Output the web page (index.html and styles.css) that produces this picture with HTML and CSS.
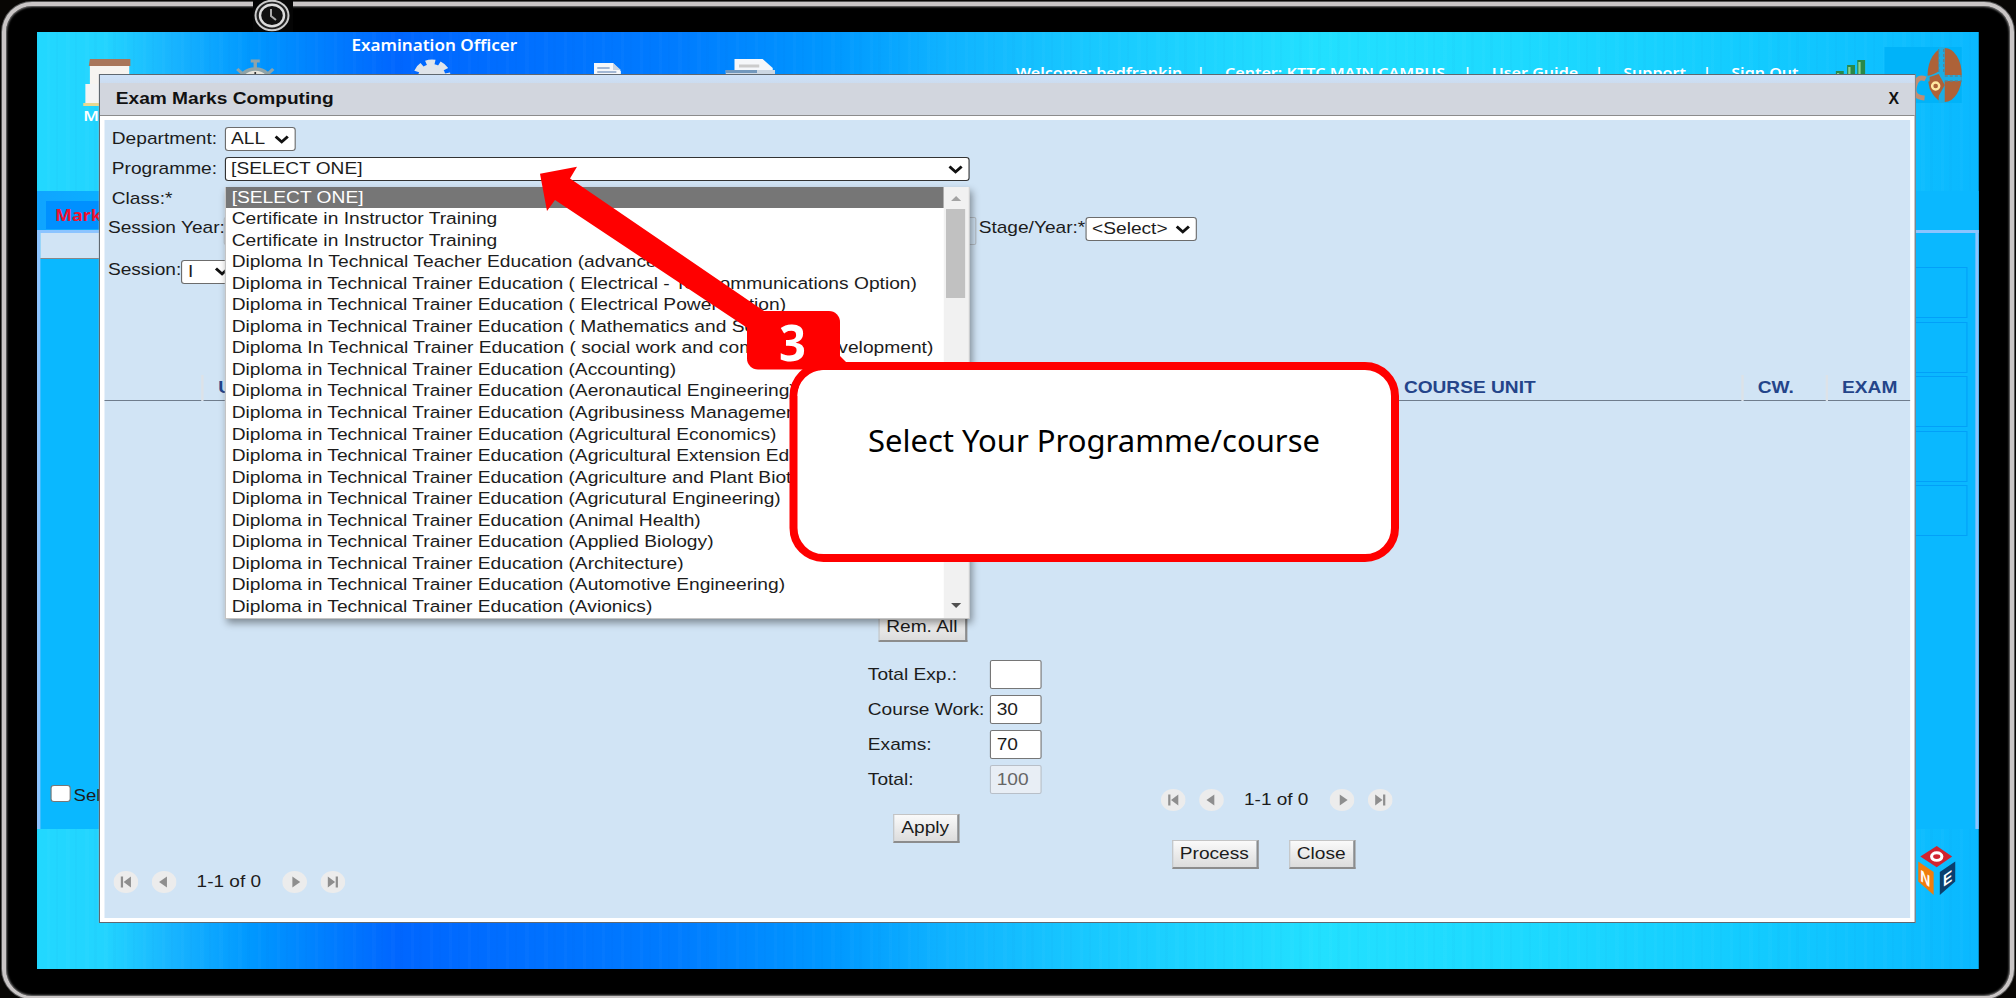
FILE: index.html
```html
<!DOCTYPE html>
<html lang="en">
<head>
<meta charset="utf-8">
<title>Exam Marks Computing</title>
<link rel="stylesheet" href="styles.css">
</head>
<body>
<div class="monitor">
  <div class="bezel"></div>
  <svg class="camera" viewBox="0 0 40 34" width="40" height="34">
    <rect width="40" height="34" fill="#050505"/>
    <ellipse cx="19" cy="15.5" rx="16.5" ry="14.8" fill="#222" stroke="#ccc" stroke-width="2"/>
    <ellipse cx="19" cy="15.5" rx="12" ry="10.8" fill="#111" stroke="#ddd" stroke-width="2.4"/>
    <path d="M18 9v7l5 4" fill="none" stroke="#aaa" stroke-width="2"/>
  </svg>

  <div class="screen">
    <header class="topbar">
      <div class="role">Examination Officer</div>
      <div class="launcher">
        <svg class="ic-board" width="46" height="47" viewBox="0 0 46 47"><path d="M6 7h35v40H6z" fill="#f7f4f0"/><path d="M6 0h36v7H5z" fill="#a9765a"/><path d="M2 25h18v20H2z" fill="#f4f4f4"/><path d="M0 44h30v3H0z" fill="#e8d890"/></svg>
        <svg class="ic-watch" width="38" height="30" viewBox="0 0 38 30"><circle cx="19" cy="25" r="15" fill="#e6e4dc" stroke="#8fa3a8" stroke-width="3.5"/><path d="M19 1v9M15 2h8M3 10l5 5M35 10l-5 5" stroke="#8fa3a8" stroke-width="3"/><path d="M19 13v4M11 17l2 3M27 17l-2 3" stroke="#333" stroke-width="1.5"/></svg>
        <svg class="ic-gear" width="40" height="30" viewBox="0 0 40 30"><circle cx="19" cy="17" r="12" fill="#dfe4ea"/><circle cx="19" cy="17" r="13" fill="none" stroke="#dfe4ea" stroke-width="7" stroke-dasharray="7.5 3.7"/></svg>
        <svg class="ic-doc" width="24" height="26" viewBox="0 0 24 26"><path d="M0 0h17l7 8v18H0z" fill="#f5f7fa"/><path d="M3 5h11M3 9h17" stroke="#86a3c8" stroke-width="1.500"/><path d="M17 0v7h7" fill="#c8d4e2"/></svg>
        <svg class="ic-print" width="44" height="30" viewBox="0 0 44 30"><path d="M8 0h25l9 9v12H8z" fill="#f5f7fa"/><path d="M12 7h18" stroke="#ccc" stroke-width="3"/><path d="M0 11h44v14H0z" fill="#ccd7e3"/><path d="M0 11h28v3H0z" fill="#7298bd"/></svg>
        <div class="links"><span class="l1">Welcome: bedfrankin</span><i>|</i><span class="l2">Center: KTTC MAIN CAMPUS</span><i>|</i><span class="l3">User Guide</span><i>|</i><span class="l4">Support</span><i>|</i><span class="l5">Sign Out</span></div>
        <svg class="ic-bars" width="28" height="30" viewBox="0 0 28 30"><path d="M1 12h7v18H1zM11 6h7v24h-7zM20 1h7v29h-7z" fill="#29894a"/><path d="M2 14h2v16H2zM12 8h2v22h-2zM21 3h2v27h-2z" fill="#8cd18f"/></svg>
        <svg class="ic-logo" width="69" height="56" viewBox="0 0 77 56" preserveAspectRatio="none"><path d="M0 0h77v56H0z" fill="#00b3f9"/><ellipse cx="60" cy="28" rx="17" ry="27" fill="#ad6238"/><path d="M57 0v30M53 31h24M57 30v26M42 32q11-2 15-7" fill="none" stroke="#19aee5" stroke-width="6"/><path d="M54 2v24M59 2v24M60 29h17M60 34h17" stroke="#5b8290" stroke-width="1.3" stroke-dasharray="3 2"/><path d="M45 30l9-3 6 11-7 13-8-9z" fill="#ad6238"/><circle cx="51" cy="39" r="3.5" fill="none" stroke="#ffe9a0" stroke-width="2.4"/><path d="M41 32q-8-4-11 7t10 12" fill="none" stroke="#c08d72" stroke-width="5"/></svg>
      </div>
      <div class="menu-word">M</div>
    </header>
    <div class="tabs"><div class="tab">Mark</div></div>
    <main class="page">
      <div class="subbar"></div>
      <div class="boxes"><div></div><div></div><div></div><div></div><div></div></div>
      <label class="selectall"><span class="check"></span>Sel</label>
    </main>
    <footer class="foot">
      <svg width="42" height="50" viewBox="0 0 46 52" preserveAspectRatio="none">
        <path d="M6 24l-6 10h6z" fill="#c93a5c"/>
        <path d="M27 0l15 11-15 11-16-11z" fill="#d1232f"/>
        <ellipse cx="27" cy="11" rx="5" ry="4" fill="none" stroke="#fff" stroke-width="3"/>
        <path d="M9 16l15 11v24L9 37z" fill="#f07d0c"/><path d="M45 16L30 27v24l15-14z" fill="#0b3f6d"/>
        <text transform="matrix(.8 .6 0 1 11 36)" font-size="17" class="cube">N</text>
        <text transform="matrix(.8 -.6 0 1 33 43)" font-size="17" class="cube">E</text>
      </svg>
    </footer>

    <section class="modal">
      <div class="modal-strip"></div>
      <div class="titlebar"><h1>Exam Marks Computing</h1><span>X</span></div>
      <div class="body">
        <div class="frow"><span class="lab">Department:</span><div class="select dept">ALL<svg class="chev" viewBox="0 0 12 8"><path d="M1 1.2l5 5 5-5"/></svg></div></div>
        <div class="frow"><span class="lab">Programme:</span><div class="select prog">[SELECT ONE]<svg class="chev" viewBox="0 0 12 8"><path d="M1 1.2l5 5 5-5"/></svg></div></div>
        <div class="frow"><span class="lab">Class:*</span></div>
        <div class="frow year"><span class="lab">Session Year:*</span><div class="blank"></div><span>Stage/Year:*</span><div class="select stage">&lt;Select&gt;<svg class="chev" viewBox="0 0 12 8"><path d="M1 1.2l5 5 5-5"/></svg></div></div>
        <div class="frow session"><span>Session:</span><div class="select sess">I<svg class="chev" viewBox="0 0 12 8"><path d="M1 1.2l5 5 5-5"/></svg></div></div>
        <div class="thead"><div></div><div>UNIT</div><div>COURSE UNIT</div><div>CW.</div><div>EXAM</div></div>
        <div class="lower">
          <div class="left"><div class="pager">
            <svg viewBox="0 0 22 22"><circle cx="11" cy="11" r="11"/><path d="M15.500 5.500v11l-6.500-5.500zM6.500 5.500h2v11h-2z"/></svg>
            <svg viewBox="0 0 22 22"><circle cx="11" cy="11" r="11"/><path d="M13.500 5.500v11l-7-5.500z"/></svg>
            <b>1-1 of 0</b>
            <svg viewBox="0 0 22 22"><circle cx="11" cy="11" r="11"/><path d="M9 5.500v11l7-5.500z"/></svg>
            <svg viewBox="0 0 22 22"><circle cx="11" cy="11" r="11"/><path d="M6.500 5.500v11l6.500-5.500zM13.500 5.500h2v11h-2z"/></svg>
          </div></div>
          <div class="mid">
            <div class="btn rem">Rem. All</div>
            <div class="field"><span>Total Exp.:</span><div class="input"></div></div>
            <div class="field"><span>Course Work:</span><div class="input">30</div></div>
            <div class="field"><span>Exams:</span><div class="input">70</div></div>
            <div class="field"><span>Total:</span><div class="input off">100</div></div>
            <div class="btn apply">Apply</div>
          </div>
          <div class="right">
            <div class="pager">
            <svg viewBox="0 0 22 22"><circle cx="11" cy="11" r="11"/><path d="M15.500 5.500v11l-6.500-5.500zM6.500 5.500h2v11h-2z"/></svg>
            <svg viewBox="0 0 22 22"><circle cx="11" cy="11" r="11"/><path d="M13.500 5.500v11l-7-5.500z"/></svg>
            <b>1-1 of 0</b>
            <svg viewBox="0 0 22 22"><circle cx="11" cy="11" r="11"/><path d="M9 5.500v11l7-5.500z"/></svg>
            <svg viewBox="0 0 22 22"><circle cx="11" cy="11" r="11"/><path d="M6.500 5.500v11l6.500-5.500zM13.500 5.500h2v11h-2z"/></svg>
            </div>
            <div class="actions"><div class="btn process">Process</div><div class="btn close">Close</div></div>
          </div>
        </div>
      </div>
    </section>

    <div class="dropdown">
      <ul>
        <li class="on">[SELECT ONE]</li>
        <li>Certificate in Instructor Training</li>
        <li>Certificate in Instructor Training</li>
        <li>Diploma In Technical Teacher Education (advanced)</li>
        <li>Diploma in Technical Trainer Education ( Electrical - Telecommunications Option)</li>
        <li>Diploma in Technical Trainer Education ( Electrical Power Option)</li>
        <li>Diploma in Technical Trainer Education ( Mathematics and Science)</li>
        <li>Diploma In Technical Trainer Education ( social work and community development)</li>
        <li>Diploma in Technical Trainer Education (Accounting)</li>
        <li>Diploma in Technical Trainer Education (Aeronautical Engineering)</li>
        <li>Diploma in Technical Trainer Education (Agribusiness Management)</li>
        <li>Diploma in Technical Trainer Education (Agricultural Economics)</li>
        <li>Diploma in Technical Trainer Education (Agricultural Extension Education)</li>
        <li>Diploma in Technical Trainer Education (Agriculture and Plant Biotechnology)</li>
        <li>Diploma in Technical Trainer Education (Agricutural Engineering)</li>
        <li>Diploma in Technical Trainer Education (Animal Health)</li>
        <li>Diploma in Technical Trainer Education (Applied Biology)</li>
        <li>Diploma in Technical Trainer Education (Architecture)</li>
        <li>Diploma in Technical Trainer Education (Automotive Engineering)</li>
        <li>Diploma in Technical Trainer Education (Avionics)</li>
      </ul>
      <div class="scroll"><svg viewBox="0 0 22 22"><path d="M6.500 14h9l-4.500-5z" fill="#a3a3a3"/></svg><div class="thumb"></div><svg viewBox="0 0 22 22"><path d="M6.500 7h9l-4.500 5z" fill="#505050"/></svg></div>
    </div>
  </div>

  <svg class="callout" width="880" height="410" viewBox="530 160 880 410">
    <path d="M540 173.700L577 166.700L570 178.500L767 313V341L555 200L547 211z" fill="#f00"/>
    <path d="M838 354l9 9h-12z" fill="#f00"/>
    <rect x="793.500" y="366" width="601.500" height="192" rx="30" fill="#fff" stroke="#f00" stroke-width="8"/>
    <rect x="747" y="311" width="93" height="58.500" rx="11" fill="#f00"/>
    <path d="M797.500 388q2-18 26-18h20l-10-6h-26z" fill="#f00"/>
    <path d="M797.500 396a30 26 0 0 1 30-26h30v20h-50z" fill="#fff"/>
    <text x="779" y="361" font-size="51" font-weight="700" fill="#fff" textLength="27" lengthAdjust="spacingAndGlyphs">3</text>
    <text x="868" y="452" font-size="31" fill="#000" textLength="452" lengthAdjust="spacingAndGlyphs">Select Your Programme/course</text>
  </svg>
</div>
</body>
</html>
```

FILE: styles.css
```css
* { box-sizing: border-box; }
body { margin: 0; background: #080604; font-family: "Liberation Sans", Arial, sans-serif; font-size: 17px; color: #1c1c1c; }
.monitor { position: relative; width: 2016px; height: 998px; overflow: hidden; }
.bezel { position: absolute; left: 2px; top: 2px; width: 2012px; height: 997px; border: 4.500px solid #c9c5c5; border-bottom-width: 3px; border-radius: 30px; background: #000; box-shadow: inset 0 0 2px 1px #777, 0 0 0 1px #555; }
.camera { position: absolute; left: 253px; top: 0; }

/* The desktop is shown 12.5% wider than its native size */
.screen {
  position: absolute; left: 37px; top: 32px; width: 1726px; height: 937px; overflow: hidden;
  transform: scaleX(1.125); transform-origin: 0 0;
  display: flex; flex-direction: column;
  background:
    repeating-linear-gradient(90deg, rgba(0,60,160,.02) 0 2px, transparent 2px 9px, rgba(255,255,255,.02) 9px 12px, transparent 12px 17px),
    linear-gradient(90deg, #22d8ff 0, #22d4ff 3.500%, #18b4ff 7%, #0098ff 11%, #0066ff 18.500%, #006cff 23%, #007cff 33%, #0098ff 41%, #10b4ff 47%, #18c8ff 54%, #22e0ff 66%, #1cd8ff 78%, #12caff 89%, #0ab8ff 100%);
}
.topbar { height: 159px; flex: none; color: #fff; font-family: "Noto Sans", sans-serif; font-weight: 600; }
.role { height: 27px; padding-left: 279.500px; line-height: 27px; font-size: 15.200px; white-space: nowrap; }
.launcher { height: 47px; display: flex; align-items: flex-start; white-space: nowrap; }
.launcher svg { flex: none; }
.ic-board { margin-left: 41px; }
.ic-watch { margin-left: 88px; }
.ic-gear { margin-left: 119px; }
.ic-doc { margin: 4px 0 0 123px; }
.ic-print { margin-left: 93px; }
.links { display: flex; margin: 2px 0 0 214px; font-size: 14.300px; line-height: 23px; }
.links i { width: 43px; text-align: center; font-style: normal; }
.l1 { width: 143px; } .l2 { width: 194px; } .l3 { width: 74px; } .l4 { width: 53px; } .l5 { width: 62px; }
.ic-bars { margin-left: 30px; }
.ic-logo { margin: -12px 0 0 16px; }
.menu-word { padding-left: 41px; font-size: 15px; line-height: 19px; }
.tabs { height: 39px; flex: none; padding: 10px 0 0 8px; background: linear-gradient(90deg, #10a4ff, #0ab0ff 60px, #0ab8ff 200px); }
.tab { width: 90px; height: 28px; padding-left: 8px; background: #0090ff; color: #f01030; font: bold 16px/28px "Noto Sans", sans-serif; }
.page { height: 599px; flex: none; position: relative; background: #0ab8ff; border: solid #8cc4ff; border-width: 3px 3px 0; }
.subbar { height: 26px; background: #d1e4f5; border-bottom: 1px solid #888; width: 1000px; }
.boxes { display: flex; flex-direction: column; gap: 3.500px; padding: 8px 7px 0 0; height: 516px; margin-left: 1000px; }
.boxes div { height: 51px; border: 1px solid #02a0f8; flex: none; }
.selectall { display: flex; gap: 3px; padding-left: 8.500px; align-items: center; height: 40px; font-size: 16.500px; }
.check { width: 18px; height: 17px; margin-top: -4px; background: #fff; border: 1px solid #777; border-radius: 3px; }
.foot { flex: 1; display: flex; justify-content: flex-end; padding: 17px 20px 0 0; }
.cube { font-weight: bold; fill: #fff; }

.modal { position: absolute; left: 55px; top: 42px; width: 1615px; height: 849px; border: 1px solid #606870; background: #fff; display: flex; flex-direction: column; }
.modal-strip { height: 8px; background: linear-gradient(#cfe2f8, #cbdcf0); }
.titlebar { height: 33px; flex: none; display: flex; justify-content: space-between; align-items: center; padding: 0 13px 1px 14px; background: #d2d6de; border-bottom: 1.500px solid #8c8c8c; color: #111; font-weight: bold; }
.titlebar h1 { margin: 0; font-size: 17px; }
.titlebar span { font-size: 16.500px; transform: scaleX(.85); }
.body { flex: 1; margin: 4px; padding-top: 4px; background: #d1e4f5; display: flex; flex-direction: column; min-height: 0; }
.frow { height: 30px; flex: none; display: flex; align-items: center; padding-left: 6.500px; white-space: nowrap; }
.lab { width: 100px; flex: none; }
.select { height: 24px; display: flex; align-items: center; justify-content: space-between; padding: 0 5px 0 5px; border: 1px solid #6c6c6c; border-radius: 3px; background: #fff; }
.chev { width: 13px; height: 9px; fill: none; stroke: #111; stroke-width: 2.400; }
.dept { width: 63px; } .prog { width: 662px; border-color: #333; } .stage { width: 99px; margin-left: 0; } .sess { width: 49px; margin-left: 0; }
.year { padding-left: 3px; height: 27px; }
.blank { width: 669px; height: 28px; margin: 6px 2.500px 0 2.500px; border: 1px solid #b4bcc4; border-radius: 2px; }
.year .stage { margin-top: 3px; }
.session { padding-left: 3px; height: 58px; }
.session .select { margin-top: 3px; }
.thead { flex: none; height: 26px; margin-top: 76px; display: grid; grid-template-columns: 86px 1053px 315.500px 75px 1fr; border-bottom: 1.500px solid #6f7c8c; color: #24448a; font-weight: bold; line-height: 25px; }
.thead div { border-left: 2px solid #dde2e8; padding-left: 13px; height: 26px; }
.thead div:first-child, .thead div:nth-child(3) { border-color: transparent; }
.thead div:nth-child(3) { padding-left: 14px; }
.lower { flex: 1; display: grid; grid-template-columns: 678.500px 260px 1fr; }
.left { display: flex; align-items: flex-end; padding: 0 0 25px 7.500px; }
.pager { display: flex; align-items: center; gap: 12.700px; height: 22px; }
.pager svg { width: 22px; height: 22px; fill: #8e8e8e; }
.pager circle { fill: #ececec; }
.pager b { font-weight: normal; width: 58px; margin: 0 5px; white-space: nowrap; font-size: 16.900px; }
.mid { padding-top: 212px; }
.btn { height: 29px; display: flex; align-items: center; justify-content: center; background: linear-gradient(#fafafa, #dcdcdc); border: solid; border-width: 1px 2px 2px 1px; border-color: #c4c4c4 #8c8c8c #8c8c8c #c4c4c4; }
.rem { width: 79px; margin: 0 0 15px 9px; }
.field { display: flex; align-items: center; height: 35px; }
.field span { width: 108.500px; white-space: nowrap; }
.input { width: 46px; height: 29px; padding-left: 5px; line-height: 27px; background: #fff; border: 1.500px solid #767676; border-radius: 2px; }
.off { background: #e8eef5; border-color: #b8bfc8; color: #666; }
.apply { width: 59px; margin: 17px 0 0 22px; }
.right { padding-top: 388px; }
.actions { display: flex; gap: 27px; padding: 29px 0 0 10px; }
.process { width: 77px; } .close { width: 59px; }

.dropdown { position: absolute; left: 166.500px; top: 154.500px; width: 662px; height: 432.500px; display: flex; background: #fff; border: 1px solid #c4c4c4; border-top: 0; box-shadow: 2px 4px 7px rgba(0,0,0,.4); }
.dropdown ul { flex: 1; margin: 0; padding: 0; list-style: none; min-width: 0; }
.dropdown li { height: 21.550px; line-height: 21px; padding-left: 5.500px; white-space: nowrap; overflow: hidden; font-size: 17.070px; }
.dropdown .on { background: #767676; color: #fff; }
.scroll { width: 22px; flex: none; display: flex; flex-direction: column; background: #f1f1f1; }
.scroll svg { height: 22px; width: 22px; }
.thumb { width: 17px; height: 89px; margin: 0 auto auto; background: #c1c1c1; }

.callout { position: absolute; left: 530px; top: 160px; font-family: "Noto Sans", sans-serif; }
```
